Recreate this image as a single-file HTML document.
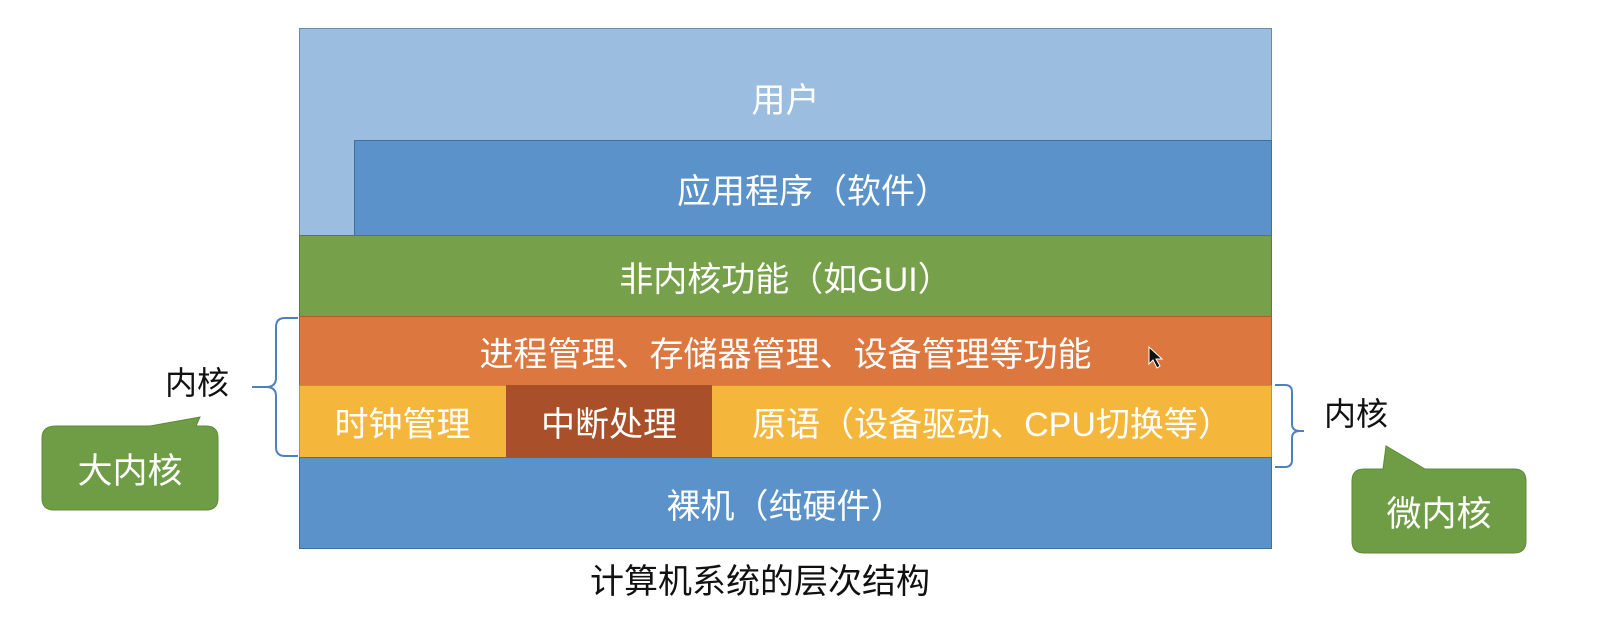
<!DOCTYPE html>
<html><head><meta charset="utf-8"><style>
body{margin:0;width:1608px;height:643px;background:#fff;position:relative;overflow:hidden;font-family:"Liberation Sans","Noto Sans CJK SC",sans-serif}
.b{position:absolute;box-sizing:border-box;color:#fff;font-size:34px;display:flex;align-items:center;justify-content:center;white-space:nowrap}
.t{position:absolute;font-size:32px;color:#111;white-space:nowrap;line-height:1}
</style></head><body>
<div class="b" style="left:299px;top:28px;width:973px;height:208px;background:#9BBDE0;border:1px solid #6d8aa8;align-items:flex-start;padding-top:44px">用户</div>
<div class="b" style="left:354px;top:140px;width:918px;height:96px;background:#5A92C9;border:1px solid #41709e">应用程序（软件）</div>
<div class="b" style="left:299px;top:235px;width:973px;height:82px;background:#76A04A;border:1px solid #5b7d38">非内核功能（如GUI）</div>
<div class="b" style="left:299px;top:316px;width:973px;height:70px;background:#DC773F;border:1px solid #b05c2e">进程管理、存储器管理、设备管理等功能</div>
<div class="b" style="left:299px;top:385px;width:973px;height:73px;background:#F5B73B;border:1px solid #c89326"></div>
<div class="b" style="left:299px;top:385px;width:207px;height:73px">时钟管理</div>
<div class="b" style="left:506px;top:385px;width:206px;height:73px;background:#A9502A">中断处理</div>
<div class="b" style="left:712px;top:385px;width:560px;height:73px">原语（设备驱动、CPU切换等）</div>
<div class="b" style="left:299px;top:457px;width:973px;height:92px;background:#5A92C9;border:1px solid #41709e">裸机（纯硬件）</div>
<svg style="position:absolute;left:0;top:0" width="1608" height="643">
<path d="M298 318 H285 Q276 318 276 327 V378 Q276 387 266 387 H252 M266 387 Q276 387 276 396 V447 Q276 456 285 456 H298" fill="none" stroke="#4f81bd" stroke-width="2"/>
<path d="M1275 385 H1285 Q1292 385 1292 392 V424 Q1292 431 1300 431 H1304 M1300 431 Q1292 431 1292 438 V460 Q1292 467 1285 467 H1275" fill="none" stroke="#4f81bd" stroke-width="2"/>
<path d="M56 426 H150 L200 417 L196 426 H206 Q218 426 218 438 V498 Q218 510 206 510 H54 Q42 510 42 498 V438 Q42 426 56 426Z" fill="#6F9D45" stroke="#5f8a3a"/>
<path d="M1364 469 H1383 L1386 446 L1425 469 H1514 Q1526 469 1526 481 V541 Q1526 553 1514 553 H1364 Q1352 553 1352 541 V481 Q1352 469 1364 469Z" fill="#6F9D45" stroke="#5f8a3a"/>
<path d="M1149 347 L1149 364 L1153 360 L1157 368 L1160 366 L1156 359 L1162 359 Z" fill="#111" stroke="#fff" stroke-width="1"/>
</svg>
<div class="t" style="left:165px;top:367px">内核</div>
<div class="t" style="left:1324px;top:398px">内核</div>
<div class="b" style="left:42px;top:426px;width:176px;height:84px;font-size:35px">大内核</div>
<div class="b" style="left:1352px;top:469px;width:174px;height:84px;font-size:35px">微内核</div>
<div class="b" style="left:460px;top:558px;width:600px;height:40px;color:#111">计算机系统的层次结构</div>
</body></html>
